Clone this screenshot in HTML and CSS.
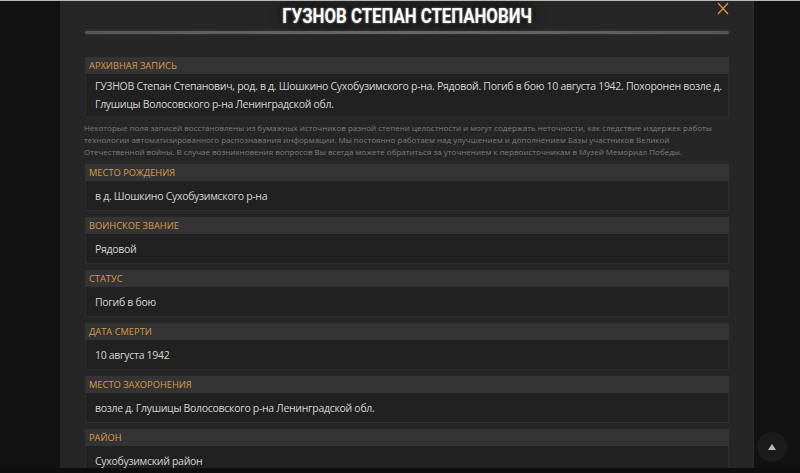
FILE: index.html
```html
<!DOCTYPE html>
<html lang="ru">
<head>
  <meta charset="UTF-8" />
  <title>ГУЗНОВ СТЕПАН СТЕПАНОВИЧ</title>
  <link rel="stylesheet" href="styles.css">
</head>
<body>
  <div class="page">
    <div class="modal">
      <div class="close">
        <svg width="14" height="14" viewBox="0 0 14 14"><path d="M2 1 L12 12 M12 1 L2 12" stroke="#d6953f" stroke-width="1.3" fill="none"/></svg>
      </div>
      <h1 class="title"><span>ГУЗНОВ СТЕПАН СТЕПАНОВИЧ</span></h1>
      <div class="title-line"></div>

      <div class="field first">
        <div class="field-label">Архивная запись</div>
        <div class="field-value tall">ГУЗНОВ Степан Степанович, род. в д. Шошкино Сухобузимского р-на. Рядовой. Погиб в бою 10 августа 1942. Похоронен возле д. Глушицы Волосовского р-на Ленинградской обл.</div>
      </div>

      <p class="note">Некоторые поля записей восстановлены из бумажных источников разной степени целостности и могут содержать неточности, как следствие издержек работы технологии автоматизированного распознавания информации. Мы постоянно работаем над улучшением и дополнением Базы участников Великой Отечественной войны. В случае возникновения вопросов Вы всегда можете обратиться за уточнением к первоисточникам в Музей Мемориал Победы.</p>

      <div class="field">
        <div class="field-label">Место рождения</div>
        <div class="field-value">в д. Шошкино Сухобузимского р-на</div>
      </div>
      <div class="field">
        <div class="field-label">Воинское звание</div>
        <div class="field-value">Рядовой</div>
      </div>
      <div class="field">
        <div class="field-label">Статус</div>
        <div class="field-value">Погиб в бою</div>
      </div>
      <div class="field">
        <div class="field-label">Дата смерти</div>
        <div class="field-value">10 августа 1942</div>
      </div>
      <div class="field">
        <div class="field-label">Место захоронения</div>
        <div class="field-value">возле д. Глушицы Волосовского р-на Ленинградской обл.</div>
      </div>
      <div class="field">
        <div class="field-label">Район</div>
        <div class="field-value">Сухобузимский район</div>
      </div>
    </div>
  </div>
  <div class="bottom-strip"></div>
  <div class="to-top">
    <svg width="10" height="8" viewBox="0 0 10 8"><path d="M5 1 L9 7 L1 7 Z" fill="#bdbdbd"/></svg>
  </div>
</body>
</html>
```

FILE: styles.css
```css
* {
  margin: 0;
  padding: 0;
  box-sizing: border-box;
}

html, body {
  height: 100%;
  overflow: hidden;
}

body {
  background: #121212;
  font-family: "Open Sans", "Noto Sans", sans-serif;
  color: #d4d4d4;
  border-top: 1px solid #b8b8b8;
}

.page {
  display: flex;
  padding-left: 60px;
  height: 100%;
}

.modal {
  position: relative;
  width: 694px;
  background: #262626;
  padding: 0 24px 0 25px;
  border-right: 1px solid #2c2c2c;
}

.close {
  position: absolute;
  right: 23px;
  top: -2px;
}

.title {
  text-align: center;
  font-family: Roboto, "Liberation Sans", sans-serif;
  font-weight: 700;
  font-size: 21px;
  line-height: 30px;
  color: #fff;
  height: 30px;
}

.title span {
  display: inline-block;
  transform: scaleX(0.8);
  text-shadow: 0 0 3px rgba(255, 255, 255, 0.5), 0 0 8px rgba(0, 0, 0, 0.9), 0 0 14px rgba(0, 0, 0, 0.7);
}

.title-line {
  height: 3px;
  background: linear-gradient(90deg, #575757, #6a6a6a 50%, #575757);
  border-radius: 2px;
  box-shadow: 0 0 3px rgba(255, 255, 255, 0.12);
  margin-bottom: 23px;
}

.field {
  margin-top: 6px;
}

.field.first {
  margin-top: 0;
}

.field-label {
  background: #343434;
  color: #d99a48;
  text-transform: uppercase;
  font-size: 9.3px;
  line-height: 17px;
  height: 17px;
  padding-left: 4px;
}

.field-value {
  background: #212121;
  border: 1px solid #2e2e2e;
  border-top: none;
  font-size: 10.5px;
  letter-spacing: -0.3px;
  line-height: 30px;
  height: 30px;
  padding-left: 9px;
}

.field-value.tall {
  height: 44px;
  line-height: 18px;
  padding-top: 3px;
}

.note {
  font-size: 8px;
  line-height: 12px;
  color: #7c7c7c;
  margin: 4px 0 0 -1px;
  height: 36px;
}

.bottom-strip {
  position: fixed;
  left: 0;
  right: 0;
  bottom: 0;
  height: 5px;
  background: #0e0e0e;
}

.to-top {
  position: fixed;
  left: 757px;
  top: 432px;
  width: 30px;
  height: 30px;
  border-radius: 50%;
  background: #1b1b1b;
  display: flex;
  align-items: center;
  justify-content: center;
}
```
